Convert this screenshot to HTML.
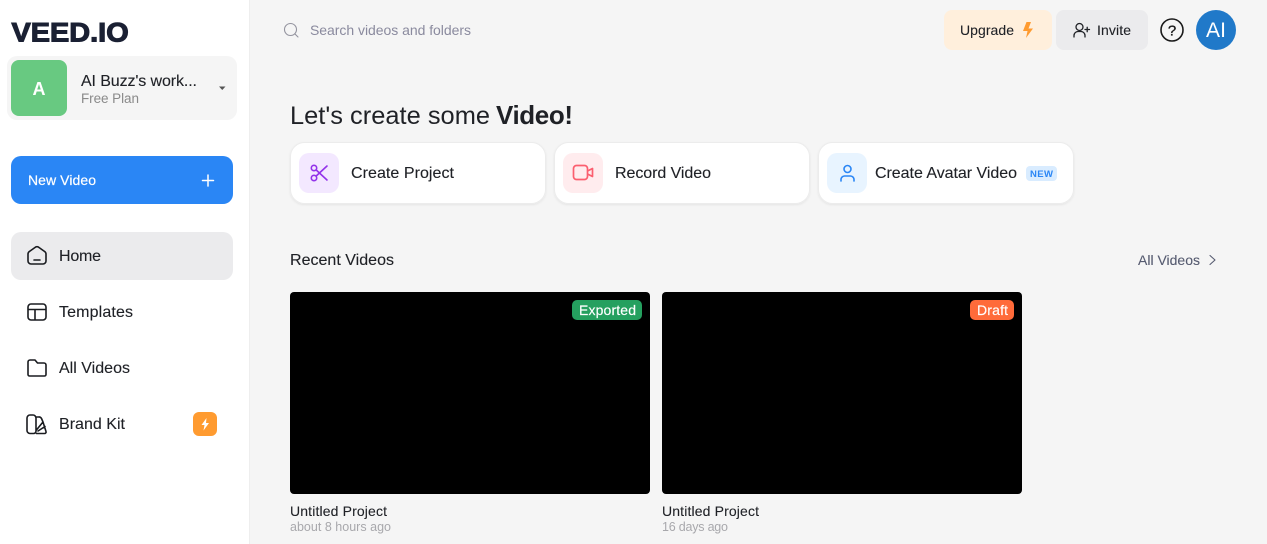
<!DOCTYPE html>
<html><head><meta charset="utf-8"><title>VEED.IO</title>
<style>
html,body{margin:0;padding:0;width:1267px;height:544px;overflow:hidden;background:#f5f5f5}
svg{display:block}
text{font-family:"Liberation Sans",sans-serif}
.n{font-size:16px;fill:#1f2126;stroke:#1f2126;stroke-width:.12}
.i{fill:none;stroke:#1a1c20;stroke-width:1.600;stroke-linecap:round;stroke-linejoin:round}
</style></head><body>
<svg width="1267" height="544" viewBox="0 0 1267 544" xmlns="http://www.w3.org/2000/svg">
<defs><filter id="s" x="-5%" y="-20%" width="110%" height="140%"><feDropShadow dx="0" dy="1" stdDeviation="1" flood-color="#000" flood-opacity=".07"/></filter></defs>
<rect width="1267" height="544" fill="#f5f5f5"/>
<rect width="249" height="544" fill="#fff"/>
<rect x="249" width="1" height="544" fill="#eeeeee"/>

<text transform="translate(11.500 41.600) scale(1.070 1)" font-size="27" font-weight="700" fill="#1a2033" stroke="#1a2033" stroke-width="1.100">VEED.IO</text>

<rect x="7" y="56" width="230" height="64" rx="10" fill="#f5f5f5"/>
<rect x="11" y="60" width="56" height="56" rx="8" fill="#68c981"/>
<text x="39" y="95" font-size="18" font-weight="700" fill="#fff" text-anchor="middle">A</text>
<text x="81" y="86" font-size="16" fill="#1f2126" stroke="#1f2126" stroke-width=".12" textLength="116" lengthAdjust="spacing">AI Buzz's work...</text>
<text x="81" y="103" font-size="13.500" fill="#8a8a8a" textLength="58" lengthAdjust="spacing">Free Plan</text>
<path d="M219 86.500h6.500l-3.250 3.500z" fill="#555"/>

<rect x="11" y="156" width="222" height="48" rx="10" fill="#2a86f5"/>
<text x="28" y="185" font-size="14" fill="#fff" stroke="#fff" stroke-width=".2" textLength="68" lengthAdjust="spacing">New Video</text>
<path d="M208 175v11M202.500 180.500h11" stroke="#fff" stroke-width="1.500" stroke-linecap="round"/>

<rect x="11" y="232" width="222" height="48" rx="10" fill="#ebebed"/>
<path class="i" d="M28 254a3 3 0 0 1 1.200-2.400L35 247.500a3 3 0 0 1 4 0L44.800 251.600a3 3 0 0 1 1.200 2.400V261a3 3 0 0 1-3 3H31a3 3 0 0 1-3-3zM34 260h6"/>
<text class="n" x="59" y="261" textLength="42" lengthAdjust="spacing">Home</text>

<path class="i" d="M31 304h12a3 3 0 0 1 3 3v10a3 3 0 0 1-3 3H31a3 3 0 0 1-3-3v-10a3 3 0 0 1 3-3zM28 309.500h18M35 309.500V320"/>
<text class="n" x="59" y="317" textLength="74" lengthAdjust="spacing">Templates</text>

<path class="i" d="M28 362a2 2 0 0 1 2-2h5l2.500 3H44a2 2 0 0 1 2 2v9.500a1.500 1.500 0 0 1-1.500 1.500h-15a1.500 1.500 0 0 1-1.500-1.500z"/>
<text class="n" x="59" y="373" textLength="71" lengthAdjust="spacing">All Videos</text>

<path class="i" d="M30 415h3a3 3 0 0 1 3 3v13a2.500 2.500 0 0 1-2.500 2.500H30a3 3 0 0 1-3-3V418a3 3 0 0 1 3-3zM36 417h2.500a3 3 0 0 1 3 1.500l1.500 3.500-7 8.500M36.500 433.500H44.500a1.500 1.500 0 0 0 1.500-2l-3-9.500M38 431l7-4.500"/>
<text class="n" x="59" y="429" textLength="66" lengthAdjust="spacing">Brand Kit</text>
<rect x="193" y="412" width="24" height="24" rx="6" fill="#ff9b30"/>
<path d="M206.500 418L201.500 425h3l-1 5.500 5.500-7.500h-3z" fill="#fff"/>

<circle cx="290.500" cy="29.500" r="6" fill="none" stroke="#94949f" stroke-width="1.100"/>
<path d="M295 34l3 3" stroke="#94949f" stroke-width="1.100" stroke-linecap="round"/>
<text x="310" y="35" font-size="14" fill="#8a8a9e" textLength="161" lengthAdjust="spacing">Search videos and folders</text>

<rect x="944" y="10" width="108" height="40" rx="8" fill="#ffefdc"/>
<text x="960" y="35" font-size="14" fill="#1f2126" stroke="#1f2126" stroke-width=".1" textLength="54" lengthAdjust="spacing">Upgrade</text>
<path d="M1026.500 22L1023 31h4.500L1026 38l7-9.500h-4.500L1031 22z" fill="#ff9b30"/>
<rect x="1056" y="10" width="92" height="40" rx="8" fill="#ebebed"/>
<circle cx="1079.500" cy="27" r="3.500" fill="none" stroke="#1f2126" stroke-width="1.300"/>
<path d="M1074 37v-1.500a4 4 0 0 1 4-4h3a4 4 0 0 1 4 4V37M1085 29.500h4.500M1087.200 27.300v4.400" fill="none" stroke="#1f2126" stroke-width="1.300" stroke-linecap="round"/>
<text x="1097" y="35" font-size="14" fill="#1f2126" stroke="#1f2126" stroke-width=".1" textLength="34" lengthAdjust="spacing">Invite</text>
<circle cx="1172" cy="30" r="11" fill="none" stroke="#1a1a1a" stroke-width="1.600"/>
<text x="1172" y="35.500" font-size="15" fill="#1a1a1a" stroke="#1a1a1a" stroke-width=".3" text-anchor="middle">?</text>
<circle cx="1216" cy="30" r="20" fill="#2079c9"/>
<text x="1206" y="37" font-size="21" fill="#fff" textLength="20" lengthAdjust="spacing">AI</text>

<text x="290" y="124" font-size="25.400" fill="#1f2126" textLength="200" lengthAdjust="spacing">Let's create some</text>
<text x="496" y="124" font-size="26" font-weight="700" fill="#1f2126" textLength="77" lengthAdjust="spacing">Video!</text>

<rect x="290.500" y="142.500" width="255" height="61" rx="14" fill="#fff" stroke="#ececec" filter="url(#s)"/>
<rect x="299" y="153" width="40" height="40" rx="10" fill="#f3e8ff"/>
<g fill="none" stroke="#9333ea" stroke-width="1.600" stroke-linecap="round"><circle cx="314" cy="168" r="2.700"/><circle cx="314" cy="178" r="2.700"/><path d="M316.200 170L327 180M316.200 176L327 166"/></g>
<text class="n" x="351" y="178" textLength="103" lengthAdjust="spacing">Create Project</text>

<rect x="554.500" y="142.500" width="255" height="61" rx="14" fill="#fff" stroke="#ececec" filter="url(#s)"/>
<rect x="563" y="153" width="40" height="40" rx="10" fill="#ffecee"/>
<g fill="none" stroke="#fb5f6f" stroke-width="1.700" stroke-linejoin="round"><rect x="573.500" y="165.500" width="14" height="14" rx="3"/><path d="M587.500 171l5-2.500v8l-5-2.500"/></g>
<text class="n" x="615" y="178" textLength="96" lengthAdjust="spacing">Record Video</text>

<rect x="818.500" y="142.500" width="255" height="61" rx="14" fill="#fff" stroke="#ececec" filter="url(#s)"/>
<rect x="827" y="153" width="40" height="40" rx="10" fill="#e8f4ff"/>
<g fill="none" stroke="#2a86f5" stroke-width="1.600" stroke-linecap="round"><circle cx="847.500" cy="169" r="3.500"/><path d="M841 181v-1.500a3.500 3.500 0 0 1 3.500-3.500h6a3.500 3.500 0 0 1 3.500 3.500V181"/></g>
<text class="n" x="875" y="178" textLength="142" lengthAdjust="spacing">Create Avatar Video</text>
<rect x="1026" y="166" width="31" height="15" rx="4" fill="#d9ecff"/>
<text x="1030" y="177" font-size="9.500" font-weight="700" fill="#2a86f5" textLength="23" lengthAdjust="spacing">NEW</text>

<text class="n" x="290" y="265" textLength="104" lengthAdjust="spacing">Recent Videos</text>
<text x="1138" y="265" font-size="14" fill="#565b70" stroke="#565b70" stroke-width=".1" textLength="62" lengthAdjust="spacing">All Videos</text>
<path d="M1210 255.500l5 4.500-5 4.500" fill="none" stroke="#565b70" stroke-width="1.100" stroke-linecap="round" stroke-linejoin="round"/>

<rect x="290" y="292" width="360" height="202" rx="4" fill="#000"/>
<rect x="662" y="292" width="360" height="202" rx="4" fill="#000"/>
<rect x="572" y="300" width="70" height="20" rx="5" fill="#25a05f"/>
<text x="579" y="315" font-size="14" fill="#fff" stroke="#fff" stroke-width=".15" textLength="57" lengthAdjust="spacing">Exported</text>
<rect x="970" y="300" width="44" height="20" rx="5" fill="#ff6b3a"/>
<text x="977" y="315" font-size="14" fill="#fff" stroke="#fff" stroke-width=".15" textLength="31" lengthAdjust="spacing">Draft</text>

<text x="290" y="516" font-size="14" fill="#1f2126" stroke="#1f2126" stroke-width=".1" textLength="97" lengthAdjust="spacing">Untitled Project</text>
<text x="290" y="531" font-size="12.500" fill="#a8a8ac" textLength="101" lengthAdjust="spacing">about 8 hours ago</text>
<text x="662" y="516" font-size="14" fill="#1f2126" stroke="#1f2126" stroke-width=".1" textLength="97" lengthAdjust="spacing">Untitled Project</text>
<text x="662" y="531" font-size="12.500" fill="#a8a8ac" textLength="66" lengthAdjust="spacing">16 days ago</text>
</svg>
</body></html>
